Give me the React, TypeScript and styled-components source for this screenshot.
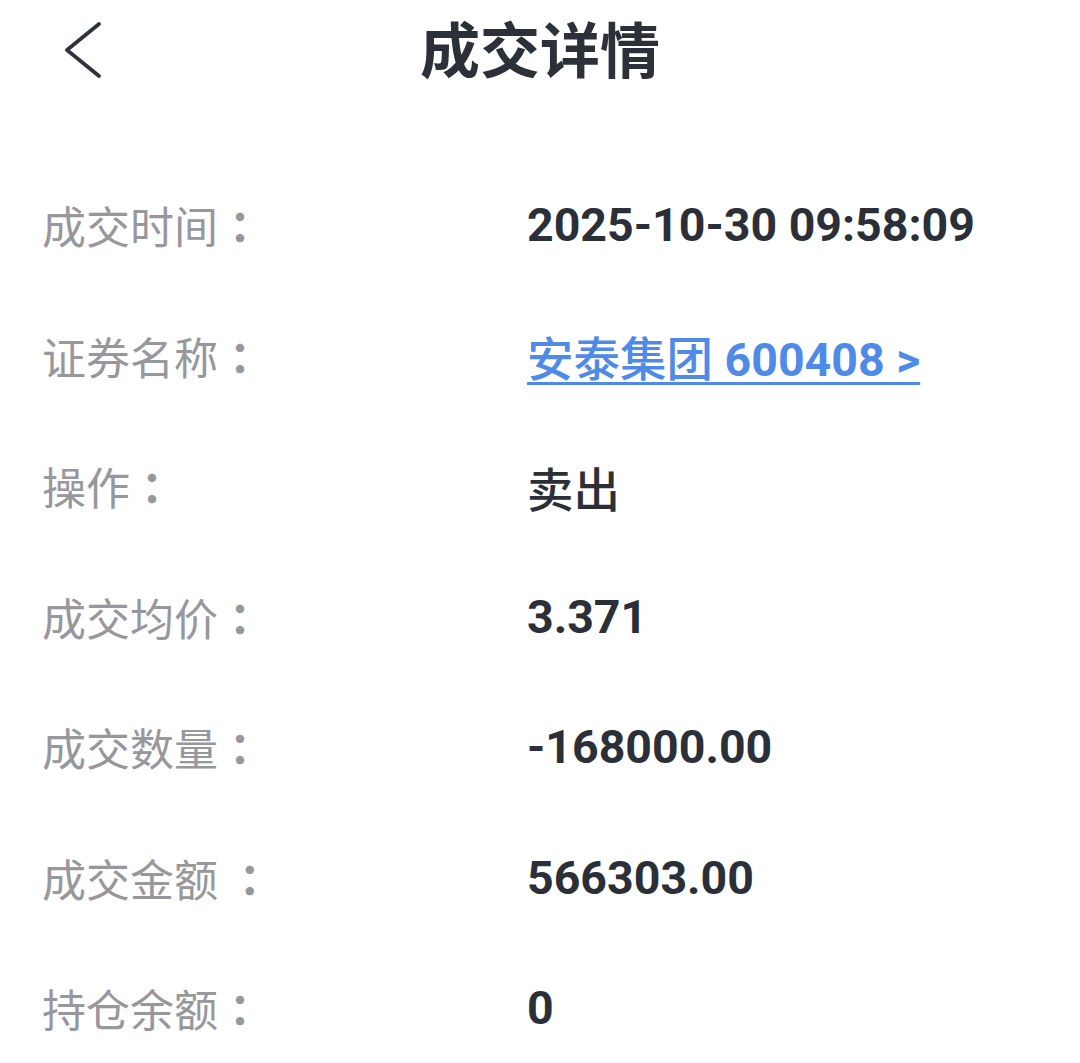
import React from "react";
import styled, { createGlobalStyle } from "styled-components";

const GlobalStyle = createGlobalStyle`
  html, body {
    margin: 0;
    padding: 0;
    background: #ffffff;
  }
  body {
    font-family: Roboto, "Noto Sans CJK SC", sans-serif;
  }
`;

const StPage = styled.div`
  width: 1080px;
  height: 1063px;
  overflow: hidden;
  background: #ffffff;
`;

const StHeader = styled.div`
  display: grid;
  grid-template-columns: 1fr auto 1fr;
  align-items: center;
  height: 100px;
`;

const StBack = styled.div`
  padding-left: 62px;
  display: flex;
  align-items: center;
`;

const StTitle = styled.div`
  font-family: "Noto Sans CJK SC", sans-serif;
  font-weight: 700;
  font-size: 60px;
  color: #2c3038;
  line-height: 1;
  margin-bottom: 6px;
`;

const StList = styled.div`
  display: flex;
  flex-direction: column;
  padding: 60px 0 0 42px;
`;

const StRow = styled.div`
  display: grid;
  grid-template-columns: 485px 1fr;
  align-items: center;
  height: 130.5px;
`;

const StLabel = styled.div`
  font-family: "Noto Sans CJK SC", sans-serif;
  font-size: 44px;
  color: #97979c;
  white-space: pre;
`;

const StColon = styled.span`
  font-family: "Noto Sans CJK TC", sans-serif;
  font-weight: 700;
`;

const StValue = styled.div<{ $link?: boolean }>`
  font-family: Roboto, "Noto Sans CJK SC", sans-serif;
  font-weight: 700;
  font-size: 46.5px;
  color: ${(p) => (p.$link ? "#4f8ae8" : "#2b2f37")};
  text-decoration: ${(p) => (p.$link ? "underline" : "none")};
  text-decoration-thickness: 2.5px;
  text-underline-offset: 6px;
  white-space: pre;
`;

const StHan = styled.span`
  font-family: "Noto Sans CJK SC", sans-serif;
  font-weight: 500;
`;

const rows: { label: string; gap?: boolean; han?: string; value: string; link?: boolean }[] = [
  { label: "成交时间", value: "2025-10-30 09:58:09" },
  { label: "证券名称", han: "安泰集团", value: " 600408 >", link: true },
  { label: "操作", han: "卖出", value: "" },
  { label: "成交均价", value: "3.371" },
  { label: "成交数量", value: "-168000.00" },
  { label: "成交金额", gap: true, value: "566303.00" },
  { label: "持仓余额", value: "0" },
];

export default function App() {
  return (
    <StPage>
      <GlobalStyle />
      <StHeader>
        <StBack>
          <svg width="40" height="58" viewBox="0 0 40 58">
            <path
              d="M37 3 L5 29 L37 55"
              fill="none"
              stroke="#2f333b"
              strokeWidth="3.8"
              strokeLinecap="round"
              strokeLinejoin="round"
            />
          </svg>
        </StBack>
        <StTitle>成交详情</StTitle>
        <div />
      </StHeader>
      <StList>
        {rows.map((r) => (
          <StRow key={r.label}>
            <StLabel>
              {r.label}
              {r.gap ? " " : ""}
              <StColon>：</StColon>
            </StLabel>
            <StValue $link={r.link}>
              {r.han ? <StHan>{r.han}</StHan> : null}
              {r.value}
            </StValue>
          </StRow>
        ))}
      </StList>
    </StPage>
  );
}
